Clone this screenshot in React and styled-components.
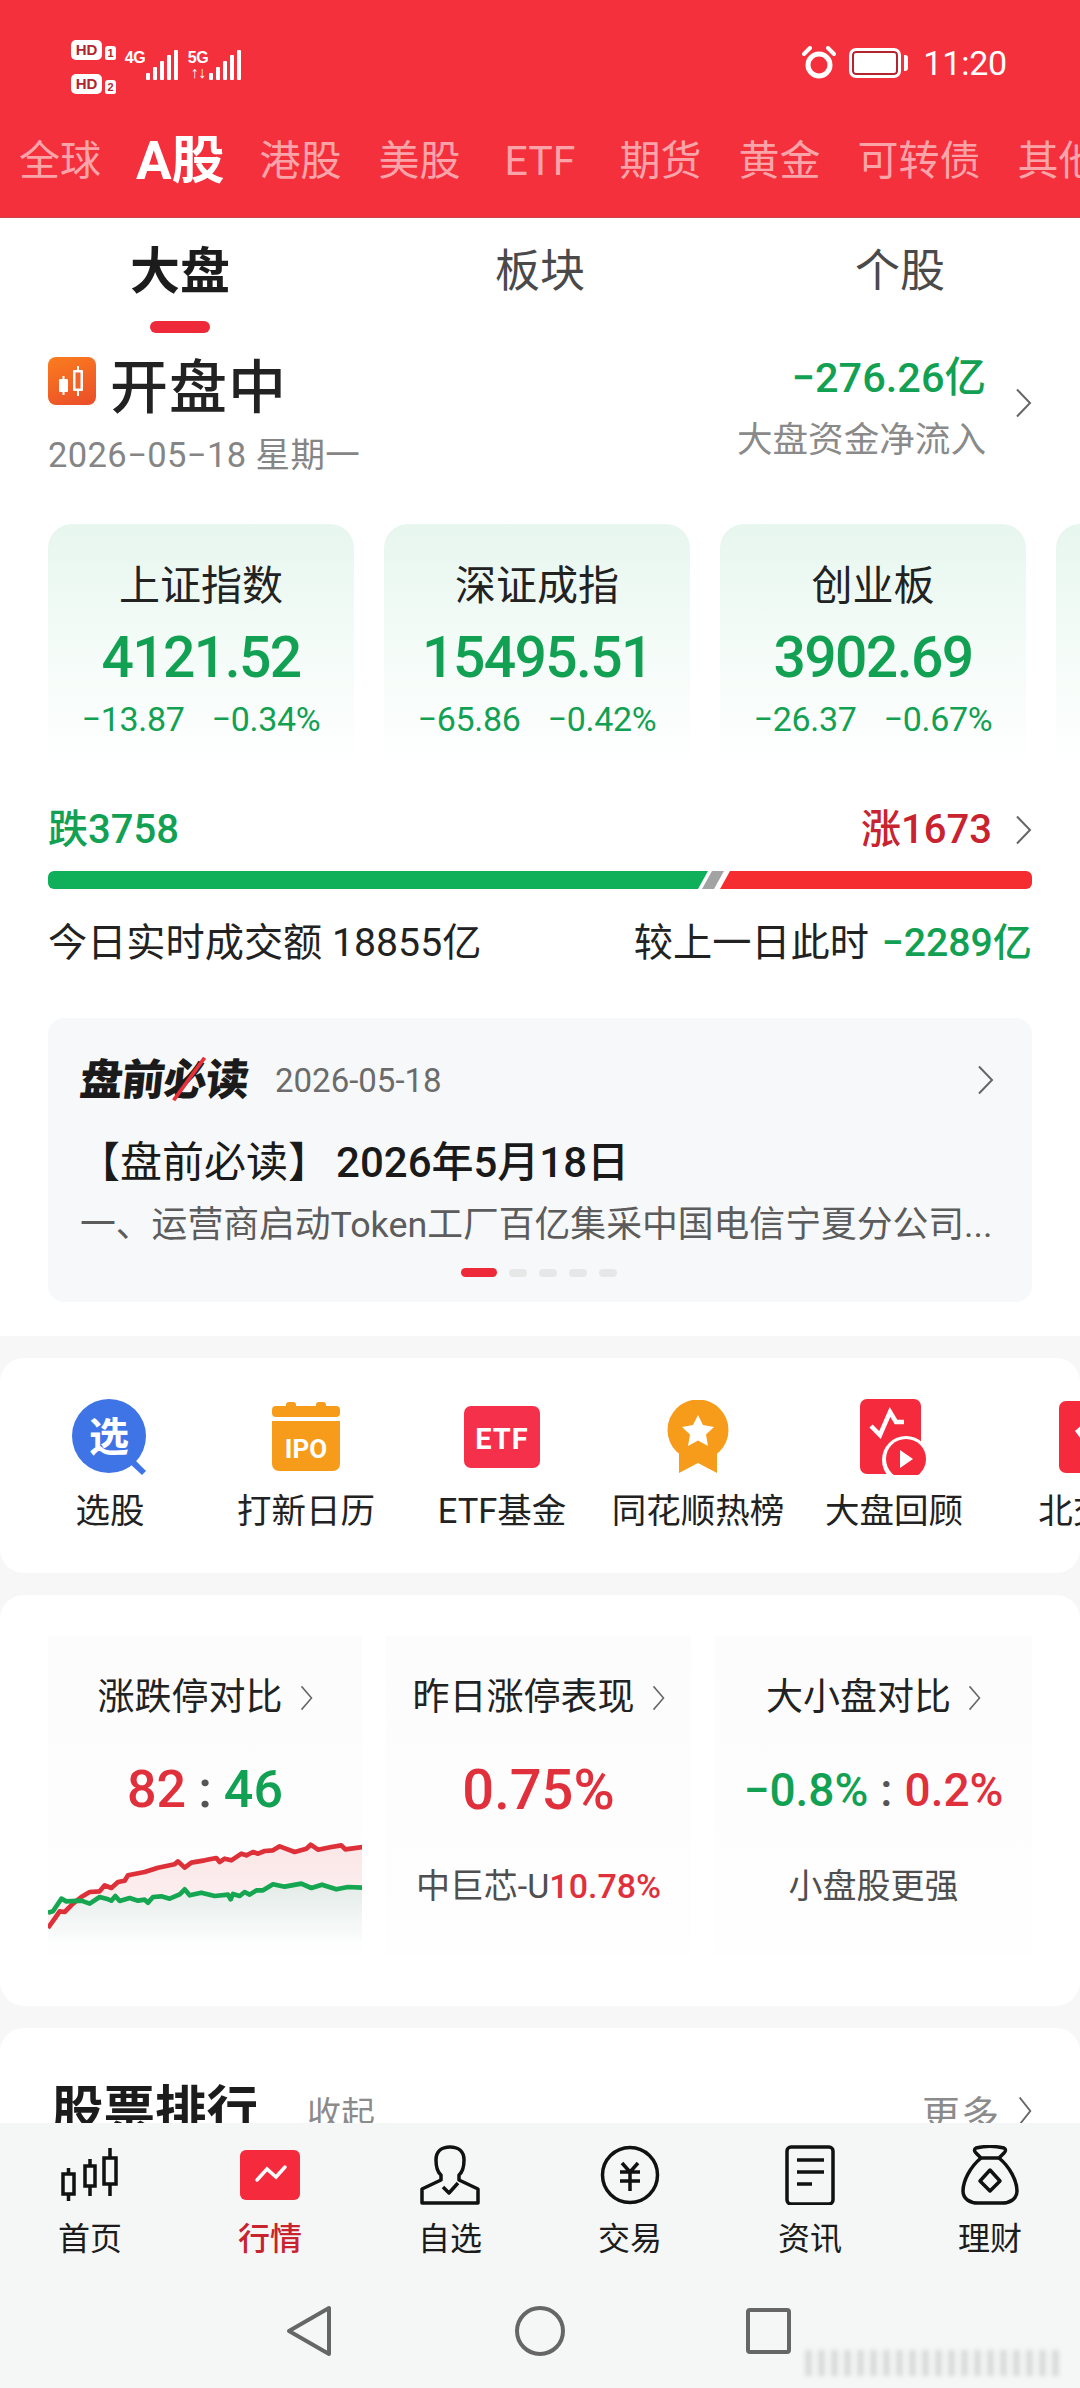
import React from 'react';
import styled, { createGlobalStyle } from 'styled-components';

const GlobalStyle = createGlobalStyle`
html, body { margin: 0; padding: 0; background: #fff; }
* { box-sizing: border-box; }
body { font-family: Roboto, "Noto Sans CJK SC", sans-serif; }
`;

const GREEN = '#12a153';
const RED = '#e0303c';

const Screen = styled.div`
width: 1080px;
height: 2388px;
display: flex;
flex-direction: column;
overflow: hidden;
background: #f7f7f7;
`;

/* header */
const Header = styled.header`
flex: 0 0 218px;
background: #f4303d;
border-bottom: 1px solid #c9404a;
display: flex;
flex-direction: column;
`;
const StatusBar = styled.div`
height: 136px;
padding: 40px 73px 0 71px;
display: flex;
justify-content: space-between;
align-items: flex-start;
color: #fff;
`;
const StatusLeft = styled.div`
display: flex;
gap: 9px;
`;
const SimColumn = styled.div`
display: flex;
flex-direction: column;
gap: 14px;
`;
const SimRow = styled.div`
display: flex;
align-items: flex-end;
gap: 3px;
`;
const HdBadge = styled.span`
width: 31px;
height: 20px;
border-radius: 5px;
background: #fff;
color: #b3242e;
font: 700 15px/20px "Liberation Sans", sans-serif;
text-align: center;
`;
const SimTag = styled.span`
width: 11px;
height: 14px;
border-radius: 3px 3px 2px 2px;
background: #fff;
color: #b3242e;
font: 700 11px/14px "Liberation Sans", sans-serif;
text-align: center;
`;
const Signal = styled.div`
display: flex;
align-items: flex-end;
gap: 1px;
height: 40px;
padding-top: 10px;
`;
const NetColumn = styled.div`
display: flex;
flex-direction: column;
justify-content: space-between;
align-items: center;
height: 30px;
width: 20px;
`;
const NetLabel = styled.span`
font: 700 16px/15px "Liberation Sans", sans-serif;
letter-spacing: -0.5px;
`;
const StatusRight = styled.div`
display: flex;
align-items: center;
height: 46px;
gap: 13px;
`;
const Clock = styled.span`
font: 400 34px/46px Roboto, sans-serif;
margin-left: 2px;
letter-spacing: -0.2px;
`;
const Battery = styled.div`
display: flex;
align-items: center;
gap: 3px;
`;
const BatteryBody = styled.div`
width: 52px;
height: 30px;
border-radius: 7px;
background: #fff;
border: 3px solid #fff;
box-shadow: inset 0 0 0 2px #b3242e;
`;
const BatteryCap = styled.div`
width: 4px;
height: 16px;
border-radius: 0 3px 3px 0;
background: #fff;
`;
const MarketTabs = styled.nav`
display: flex;
align-items: center;
gap: 37px;
padding-left: 19px;
height: 50px;
white-space: nowrap;
overflow: hidden;
`;
const MarketTab = styled.span`
font-size: ${p => (p.$active ? 53 : 41)}px;
font-weight: ${p => (p.$active ? 700 : 400)};
line-height: 50px;
color: ${p => (p.$active ? '#fff' : 'rgba(255,255,255,.58)')};
flex: none;
margin: ${p => (p.$active ? '0 -2px 0 -2px' : p.$latin ? '0 7px' : '0')};
`;

/* scrolling content */
const Scroll = styled.main`
flex: 1;
min-height: 0;
overflow: hidden;
`;
const Section = styled.section`
background: #fff;
border-radius: ${p => (p.$flat ? '0' : '24px')};
margin-bottom: 22px;
padding-bottom: ${p => p.$pad || 0}px;
`;
const SubTabs = styled.div`
display: grid;
grid-template-columns: repeat(3, 360px);
height: 115px;
`;
const SubTab = styled.div`
display: flex;
flex-direction: column;
align-items: center;
padding-top: 26px;
font-size: ${p => (p.$active ? 50 : 45)}px;
font-weight: ${p => (p.$active ? 700 : 400)};
line-height: 56px;
color: ${p => (p.$active ? '#1c1c1c' : '#4a4a4a')};
`;
const Indicator = styled.i`
width: 60px;
height: 12px;
border-radius: 6px;
background: #ee2a3a;
margin-top: 21px;
`;
const Summary = styled.div`
display: flex;
justify-content: space-between;
padding: 20px 48px 0;
height: 191px;
`;
const SummaryLeft = styled.div`
display: flex;
flex-direction: column;
`;
const StateRow = styled.div`
display: flex;
align-items: center;
gap: 14px;
height: 70px;
margin-top: -5px;
`;
const StateIcon = styled.div`
width: 48px;
height: 48px;
border-radius: 8px;
background: linear-gradient(160deg, #fb7d1e, #ea4d2a);
display: flex;
align-items: center;
justify-content: center;
margin-top: -4px;
`;
const StateText = styled.h1`
margin: 0;
font-size: 58px;
font-weight: 500;
color: #222;
letter-spacing: 1px;
`;
const DateLine = styled.div`
font-size: 34.5px;
line-height: 40px;
color: #858585;
margin-top: 17px;
letter-spacing: 0.4px;
`;
const SummaryRight = styled.div`
display: flex;
align-items: flex-start;
gap: 29px;
`;
const FlowColumn = styled.div`
display: flex;
flex-direction: column;
align-items: flex-end;
`;
const FlowValue = styled.div`
font-size: 41.5px;
line-height: 50px;
font-weight: 500;
color: ${GREEN};
`;
const FlowLabel = styled.div`
font-size: 35.6px;
line-height: 44px;
color: #8a8a8a;
margin-top: 15px;
`;
const ChevronSlot = styled.div`
margin-top: 35px;
`;
const Cards = styled.div`
display: flex;
gap: 30px;
padding-left: 48px;
overflow: hidden;
`;
const IndexCard = styled.div`
flex: 0 0 306px;
height: 246px;
border-radius: 24px 24px 0 0;
background: linear-gradient(180deg, #e7f6ef 0%, #f3fbf7 45%, #fff 100%);
display: flex;
flex-direction: column;
align-items: center;
padding-top: 38px;
`;
const CardTitle = styled.div`
font-size: 41px;
line-height: 48px;
color: #222;
`;
const CardValue = styled.div`
font-size: 57px;
line-height: 62px;
font-weight: 500;
color: ${GREEN};
margin-top: 17px;
letter-spacing: -1.6px;
`;
const CardDelta = styled.div`
display: flex;
gap: 27px;
font-size: 34px;
line-height: 40px;
color: ${GREEN};
margin-top: 10px;
letter-spacing: -0.3px;
`;
const Breadth = styled.div`
display: flex;
justify-content: space-between;
align-items: center;
padding: 0 48px;
margin-top: 40px;
height: 40px;
`;
const BreadthValue = styled.span`
font-size: 40px;
line-height: 40px;
font-weight: 500;
color: ${p => p.$color};
`;
const BreadthRight = styled.div`
display: flex;
align-items: center;
gap: 23px;
`;
const Bar = styled.div`
display: flex;
height: 18px;
margin: 21px 48px 0;
border-radius: 6px;
overflow: hidden;
`;
const BarPart = styled.div`
flex: ${p => p.$flex};
margin-left: ${p => p.$offset || 0}px;
background: ${p => p.$color};
clip-path: polygon(${p => (p.$offset ? '10px' : '0')} 0, 100% 0, ${p => (p.$end ? '100%' : 'calc(100% - 10px)')} 100%, 0 100%);
`;
const Turnover = styled.div`
display: flex;
justify-content: space-between;
padding: 0 48px;
margin-top: 32px;
font-size: 39.2px;
line-height: 44px;
color: #222;
`;
const TurnoverChange = styled.span`
color: ${GREEN};
font-weight: 500;
margin-left: 3px;
`;
const News = styled.div`
margin: 53px 48px 0;
height: 284px;
border-radius: 16px;
background: #f7f8f9;
padding: 38px 38px 0 32px;
display: flex;
flex-direction: column;
`;
const NewsTop = styled.div`
display: flex;
align-items: center;
height: 48px;
`;
const NewsLogo = styled.span`
display: inline-block;
font-size: 43px;
line-height: 48px;
font-weight: 900;
color: #1b1b1b;
letter-spacing: -1px;
transform: skewX(-6deg);
`;
const NewsLogoMark = styled.span`
position: relative;
&::after {
  content: '';
  position: absolute;
  left: 0;
  top: 22px;
  width: 50px;
  height: 4px;
  background: #e8303a;
  transform: rotate(-58deg);
}
`;
const NewsDate = styled.span`
font-size: 33px;
color: #6b6b6b;
margin-left: 27px;
flex: 1;
`;
const NewsTitle = styled.div`
font-size: 42px;
line-height: 46px;
color: #1a1a1a;
margin-top: 36px;
margin-left: -2px;
`;
const NewsTitleDate = styled.span`
font-weight: 500;
margin-left: 6px;
`;
const NewsBody = styled.div`
font-size: 35.8px;
line-height: 44px;
color: #5c5c5c;
margin-top: 17px;
white-space: nowrap;
width: 922px;
overflow: hidden;
`;
const Dots = styled.div`
display: flex;
align-items: center;
justify-content: center;
gap: 12px;
margin-top: 21px;
margin-left: 3px;
`;
const Dot = styled.i`
width: ${p => (p.$active ? 36 : 18)}px;
height: ${p => (p.$active ? 9 : 8)}px;
border-radius: 5px;
background: ${p => (p.$active ? '#ee2a3a' : '#e6e8e8')};
`;

/* quick entries */
const Quick = styled.div`
display: grid;
grid-auto-flow: column;
grid-auto-columns: 196px;
padding: 41px 0 42px 12px;
overflow: hidden;
`;
const QuickItem = styled.div`
display: flex;
flex-direction: column;
align-items: center;
gap: 16px;
`;
const QuickIcon = styled.div`
height: 76px;
display: flex;
align-items: center;
justify-content: center;
`;
const QuickLabel = styled.span`
font-size: 34.5px;
line-height: 40px;
color: #222;
white-space: nowrap;
`;

/* stats */
const Stats = styled.div`
display: grid;
grid-template-columns: 314px 305px 1fr;
gap: 24px;
padding: 41px 48px 51px;
`;
const StatCard = styled.div`
height: 319px;
background: linear-gradient(180deg, #fcfcfd, #fefefe);
display: flex;
flex-direction: column;
align-items: center;
padding-top: 42px;
overflow: hidden;
`;
const StatTitle = styled.div`
display: flex;
align-items: center;
gap: 17px;
font-size: 37px;
line-height: 40px;
color: #222;
white-space: nowrap;
`;
const StatValue = styled.div`
font-size: ${p => p.$size || 52}px;
line-height: 52px;
font-weight: 500;
margin-top: 46px;
white-space: nowrap;
color: ${p => p.$color || '#333'};
`;
const Up = styled.span`
color: ${RED};
`;
const UpNote = styled.span`
color: ${RED};
font-weight: 500;
`;
const Down = styled.span`
color: ${GREEN};
`;
const Colon = styled.span`
color: #555;
margin: 0 12px;
`;
const StatChart = styled.svg`
flex: none;
margin-top: 26px;
align-self: flex-start;
`;
const StatNote = styled.div`
font-size: 34px;
line-height: 40px;
color: #4f4f4f;
margin-top: 50px;
white-space: nowrap;
`;

/* ranking */
const RankHead = styled.div`
display: flex;
align-items: center;
padding: 53px 48px 60px 52px;
`;
const RankTitle = styled.h2`
margin: 0;
font-size: 51.5px;
line-height: 60px;
font-weight: 700;
color: #1c1c1c;
`;
const RankFold = styled.span`
font-size: 34px;
color: #8b8b8b;
margin-left: 49px;
flex: 1;
`;
const RankMore = styled.span`
display: flex;
align-items: center;
gap: 18px;
font-size: 38px;
color: #8b8b8b;
letter-spacing: 1px;
`;

/* bottom */
const Bottom = styled.footer`
flex: 0 0 265px;
background: #f5f7f7;
position: relative;
`;
const TabBar = styled.div`
display: grid;
grid-template-columns: repeat(6, 180px);
padding-top: 22px;
`;
const TabItem = styled.div`
display: flex;
flex-direction: column;
align-items: center;
gap: 16px;
`;
const TabIcon = styled.div`
height: 60px;
display: flex;
align-items: center;
justify-content: center;
`;
const TabLabel = styled.span`
font-size: 32px;
line-height: 36px;
color: ${p => (p.$active ? '#c9232f' : '#1c1c1c')};
font-weight: ${p => (p.$active ? 500 : 400)};
`;
const SystemNav = styled.div`
display: flex;
justify-content: center;
align-items: center;
gap: 170px;
margin-top: 48px;
`;
const Watermark = styled.div`
position: absolute;
left: 805px;
top: 227px;
width: 260px;
height: 26px;
filter: blur(2px);
background: repeating-linear-gradient(90deg, #d9dbdb 0 7px, transparent 7px 13px);
`;

const Chevron = ({ w = 17, h = 30, color = '#666' }) => (
  <svg width={w} height={h} viewBox="0 0 17 30" fill="none" preserveAspectRatio="none">
    <path d="M2 1.5 15 15 2 28.5" stroke={color} strokeWidth="2" />
  </svg>
);

const SignalBars = () => (
  <svg width="33" height="30" viewBox="0 0 33 30" fill="#fff">
    <rect x="0" y="23" width="4" height="7" rx="1" />
    <rect x="7" y="17" width="4" height="13" rx="1" />
    <rect x="14" y="11" width="4" height="19" rx="1" />
    <rect x="21" y="5" width="4" height="25" rx="1" />
    <rect x="28" y="0" width="4" height="30" rx="1" />
  </svg>
);

const AlarmIcon = () => (
  <svg width="34" height="34" viewBox="0 0 34 34" fill="none" stroke="#fff">
    <circle cx="17" cy="19" r="11" strokeWidth="5" />
    <path d="M17 13v7l5 3" strokeWidth="3" stroke="#f4303d" />
    <path d="M2 8 8 2M32 8 26 2" strokeWidth="4" strokeLinecap="round" />
  </svg>
);

const CandleSmall = () => (
  <svg width="34" height="34" viewBox="0 0 34 34" fill="#fff">
    <rect x="4" y="15" width="9" height="13" rx="1" />
    <rect x="7.5" y="12" width="2" height="19" />
    <rect x="18" y="6" width="10" height="21" rx="1" />
    <rect x="22" y="2" width="2" height="30" />
    <rect x="20.5" y="8.5" width="5" height="16" fill="#f1632a" />
  </svg>
);

const SelectIcon = () => (
  <svg width="76" height="76" viewBox="0 0 76 76">
    <circle cx="37" cy="37" r="37" fill="#3f74e6" />
    <path d="M62 60 74 72 70 76 57 64Z" fill="#3f74e6" />
    <text x="37" y="52" textAnchor="middle" fontSize="40" fontWeight="700" fill="#fff" fontFamily="Noto Sans CJK SC">选</text>
  </svg>
);

const IpoIcon = () => (
  <svg width="68" height="70" viewBox="0 0 68 70">
    <rect x="14" y="0" width="10" height="8" rx="3" fill="#f79c1a" />
    <rect x="44" y="0" width="10" height="8" rx="3" fill="#f79c1a" />
    <rect x="0" y="4" width="68" height="11" rx="4" fill="#f79c1a" />
    <path d="M0 19H68V62a7 7 0 0 1-7 7H7a7 7 0 0 1-7-7Z" fill="#f79c1a" />
    <text x="34" y="56" textAnchor="middle" fontSize="26" fontWeight="700" fill="#fff" fontFamily="Roboto">IPO</text>
  </svg>
);

const EtfIcon = () => (
  <svg width="76" height="62" viewBox="0 0 76 62">
    <rect width="76" height="62" rx="7" fill="#f5304a" />
    <text x="38" y="43" textAnchor="middle" fontSize="29" fontWeight="700" fill="#fff" fontFamily="Roboto" letterSpacing="1">ETF</text>
  </svg>
);

const MedalIcon = () => (
  <svg width="62" height="74" viewBox="0 0 62 74">
    <path d="M12 50V73L31 63 50 73V50Z" fill="#f79c1a" />
    <circle cx="31" cy="30" r="30.5" fill="#f79c1a" />
    <path d="M31 15 36 25 47 27 39 34.5 41 46 31 40.5 21 46 23 34.5 15 27 26 25Z" fill="#fff" />
  </svg>
);

const ReviewIcon = () => (
  <svg width="68" height="76" viewBox="0 0 68 76">
    <rect x="0" y="0" width="61" height="75" rx="7" fill="#f52a3c" />
    <path d="M11 27 20 36 30 13 36 23 H44" fill="none" stroke="#fff" strokeWidth="4.5" />
    <circle cx="46" cy="61" r="24" fill="#fff" />
    <circle cx="46" cy="60" r="20" fill="#f52a3c" />
    <path d="M40 51 53 60 40 69Z" fill="#fff" />
  </svg>
);

const BeijingIcon = () => (
  <svg width="62" height="72" viewBox="0 0 62 72">
    <rect width="62" height="72" rx="7" fill="#f52a3c" />
    <path d="M16 30 26 21H38L46 30 31 50Z" fill="#fff" />
    <circle cx="31" cy="30" r="4" fill="#f52a3c" />
  </svg>
);

const redLine = '50,378 70,350 85,328 100,330 125,305 150,285 175,270 205,268 220,250 240,258 260,240 280,236 290,220 340,210 380,197 430,187 440,178 460,197 480,182 520,175 555,168 565,180 580,170 600,175 630,155 645,160 665,150 680,155 700,147 725,145 745,133 790,150 825,140 838,128 860,143 900,135 930,130 942,142 995,135';
const greenLine = '50,332 65,328 90,290 105,298 150,296 175,305 205,285 225,290 240,296 252,282 265,297 295,288 320,296 340,293 350,302 365,285 390,283 415,290 445,277 460,262 475,280 510,272 550,282 590,278 598,292 605,276 625,282 640,270 655,278 675,265 695,265 725,247 760,254 810,245 840,258 872,248 915,262 950,255 995,257';

const LimitChart = () => (
  <StatChart width="314" height="110" viewBox="50 120 942 330">
    <defs>
      <linearGradient id="limitRed" x1="0" y1="0" x2="0" y2="1">
        <stop offset="0" stopColor="#fbe6e7" />
        <stop offset="1" stopColor="#fdf3f3" />
      </linearGradient>
      <linearGradient id="limitGreen" x1="0" y1="0" x2="0" y2="1">
        <stop offset="0" stopColor="#e3ebe7" />
        <stop offset="1" stopColor="#fcfdfd" />
      </linearGradient>
    </defs>
    <polygon points={`${greenLine} 995,420 50,420`} fill="url(#limitGreen)" />
    <polygon points={`${redLine} ${greenLine.split(' ').reverse().join(' ')}`} fill="url(#limitRed)" />
    <polyline points={redLine} fill="none" stroke="#dd3038" strokeWidth="14" strokeLinejoin="round" />
    <polyline points={greenLine} fill="none" stroke="#14a650" strokeWidth="14" strokeLinejoin="round" />
  </StatChart>
);

const HomeGlyph = () => (
  <svg width="60" height="60" viewBox="0 0 60 60" fill="none" stroke="#111" strokeWidth="3.5">
    <rect x="3" y="29" width="11" height="20" />
    <path d="M8.5 23V29M8.5 49V56" />
    <rect x="25" y="21" width="10" height="20" />
    <path d="M30 14V21M30 41V51" />
    <rect x="44" y="13" width="12" height="26" />
    <path d="M50 3V13M50 39V51" />
  </svg>
);
const MarketGlyph = () => (
  <svg width="60" height="50" viewBox="0 0 60 50">
    <rect width="60" height="50" rx="6" fill="#f52a3c" />
    <path d="M17 30 27 19 36 27 45 17" fill="none" stroke="#fff" strokeWidth="3.5" strokeLinecap="round" />
  </svg>
);
const WatchGlyph = () => (
  <svg width="60" height="60" viewBox="0 0 60 60" fill="none" stroke="#111" strokeWidth="3.5" strokeLinejoin="round">
    <path d="M2 58V44L21 35V30C16 26 16 18 16 15C16 6 22 2 30 2S44 6 44 15C44 18 44 26 39 30V35L58 44V58Z" />
    <path d="M23 42 29 48 38 38" />
  </svg>
);
const TradeGlyph = () => (
  <svg width="60" height="60" viewBox="0 0 60 60" fill="none" stroke="#111" strokeWidth="3.5">
    <circle cx="30" cy="30" r="27.5" />
    <path d="M22 18 30 27 38 18M20 27H40M20 36H40M30 27V46" />
  </svg>
);
const NewsGlyph = () => (
  <svg width="50" height="60" viewBox="0 0 50 60" fill="none" stroke="#111" strokeWidth="3.5">
    <rect x="2" y="2" width="46" height="57" rx="4" />
    <path d="M12 15H39M12 27H39M12 39H27" />
  </svg>
);
const WealthGlyph = () => (
  <svg width="58" height="60" viewBox="0 0 58 60" fill="none" stroke="#111" strokeWidth="3.5" strokeLinejoin="round">
    <path d="M15 3C23 1 35 1 43 3C45 4 45 6 43 8L38 13H20L15 8C13 6 13 4 15 3Z" />
    <path d="M20 13C9 22 2 36 2 46C2 54 9 58 17 58H41C49 58 56 54 56 46C56 36 49 22 38 13" />
    <path d="M29 25 39 36 29 46 19 36Z" />
  </svg>
);

const markets = ['全球', 'A股', '港股', '美股', 'ETF', '期货', '黄金', '可转债', '其他'];
const indexes = [
  { name: '上证指数', value: '4121.52', diff: '−13.87', pct: '−0.34%' },
  { name: '深证成指', value: '15495.51', diff: '−65.86', pct: '−0.42%' },
  { name: '创业板', value: '3902.69', diff: '−26.37', pct: '−0.67%' },
];
const quick = [
  { label: '选股', icon: <SelectIcon /> },
  { label: '打新日历', icon: <IpoIcon /> },
  { label: 'ETF基金', icon: <EtfIcon /> },
  { label: '同花顺热榜', icon: <MedalIcon /> },
  { label: '大盘回顾', icon: <ReviewIcon /> },
  { label: '北交所', icon: <BeijingIcon /> },
];
const tabs = [
  { label: '首页', icon: <HomeGlyph /> },
  { label: '行情', icon: <MarketGlyph />, active: true },
  { label: '自选', icon: <WatchGlyph /> },
  { label: '交易', icon: <TradeGlyph /> },
  { label: '资讯', icon: <NewsGlyph /> },
  { label: '理财', icon: <WealthGlyph /> },
];

export default function App() {
  return (
    <Screen>
      <GlobalStyle />
      <Header>
        <StatusBar>
          <StatusLeft>
            <SimColumn>
              <SimRow><HdBadge>HD</HdBadge><SimTag>1</SimTag></SimRow>
              <SimRow><HdBadge>HD</HdBadge><SimTag>2</SimTag></SimRow>
            </SimColumn>
            <Signal>
              <NetColumn><NetLabel>4G</NetLabel></NetColumn>
              <SignalBars />
            </Signal>
            <Signal>
              <NetColumn>
                <NetLabel>5G</NetLabel>
                <NetLabel>↑↓</NetLabel>
              </NetColumn>
              <SignalBars />
            </Signal>
          </StatusLeft>
          <StatusRight>
            <AlarmIcon />
            <Battery>
              <BatteryBody />
              <BatteryCap />
            </Battery>
            <Clock>11:20</Clock>
          </StatusRight>
        </StatusBar>
        <MarketTabs>
          {markets.map(m => (
            <MarketTab key={m} $active={m === 'A股'} $latin={m === 'ETF'}>{m}</MarketTab>
          ))}
        </MarketTabs>
      </Header>

      <Scroll>
        <Section $flat $pad={34}>
          <SubTabs>
            <SubTab $active>大盘<Indicator /></SubTab>
            <SubTab>板块</SubTab>
            <SubTab>个股</SubTab>
          </SubTabs>
          <Summary>
            <SummaryLeft>
              <StateRow>
                <StateIcon><CandleSmall /></StateIcon>
                <StateText>开盘中</StateText>
              </StateRow>
              <DateLine>2026−05−18 星期一</DateLine>
            </SummaryLeft>
            <SummaryRight>
              <FlowColumn>
                <FlowValue>−276.26亿</FlowValue>
                <FlowLabel>大盘资金净流入</FlowLabel>
              </FlowColumn>
              <ChevronSlot><Chevron /></ChevronSlot>
            </SummaryRight>
          </Summary>
          <Cards>
            {indexes.map(item => (
              <IndexCard key={item.name}>
                <CardTitle>{item.name}</CardTitle>
                <CardValue>{item.value}</CardValue>
                <CardDelta><span>{item.diff}</span><span>{item.pct}</span></CardDelta>
              </IndexCard>
            ))}
            <IndexCard />
          </Cards>
          <Breadth>
            <BreadthValue $color={GREEN}>跌3758</BreadthValue>
            <BreadthRight>
              <BreadthValue $color="#c8232f">涨1673</BreadthValue>
              <Chevron />
            </BreadthRight>
          </Breadth>
          <Bar>
            <BarPart $flex="0 0 660px" $color="#10b05a" />
            <BarPart $flex="0 0 22px" $offset={-6} $color="#a3a3a3" />
            <BarPart $flex="1" $offset={-4} $color="#f52c30" $end />
          </Bar>
          <Turnover>
            <span>今日实时成交额 18855亿</span>
            <span>较上一日此时 <TurnoverChange>−2289亿</TurnoverChange></span>
          </Turnover>
          <News>
            <NewsTop>
              <NewsLogo>盘前<NewsLogoMark>必</NewsLogoMark>读</NewsLogo>
              <NewsDate>2026-05-18</NewsDate>
              <Chevron />
            </NewsTop>
            <NewsTitle>【盘前必读】<NewsTitleDate>2026年5月18日</NewsTitleDate></NewsTitle>
            <NewsBody>一、运营商启动Token工厂百亿集采中国电信宁夏分公司...</NewsBody>
            <Dots>
              <Dot $active /><Dot /><Dot /><Dot /><Dot />
            </Dots>
          </News>
        </Section>

        <Section>
          <Quick>
            {quick.map(q => (
              <QuickItem key={q.label}>
                <QuickIcon>{q.icon}</QuickIcon>
                <QuickLabel>{q.label}</QuickLabel>
              </QuickItem>
            ))}
          </Quick>
        </Section>

        <Section>
          <Stats>
            <StatCard>
              <StatTitle>涨跌停对比<Chevron w={13} h={26} /></StatTitle>
              <StatValue><Up>82</Up><Colon>:</Colon><Down>46</Down></StatValue>
              <LimitChart />
            </StatCard>
            <StatCard>
              <StatTitle>昨日涨停表现<Chevron w={13} h={26} /></StatTitle>
              <StatValue $size={56} $color={RED}>0.75%</StatValue>
              <StatNote>中巨芯-U<UpNote>10.78%</UpNote></StatNote>
            </StatCard>
            <StatCard>
              <StatTitle>大小盘对比<Chevron w={13} h={26} /></StatTitle>
              <StatValue $size={46}><Down>−0.8%</Down><Colon>:</Colon><Up>0.2%</Up></StatValue>
              <StatNote>小盘股更强</StatNote>
            </StatCard>
          </Stats>
        </Section>

        <Section>
          <RankHead>
            <RankTitle>股票排行</RankTitle>
            <RankFold>收起</RankFold>
            <RankMore>更多<Chevron w={14} h={30} /></RankMore>
          </RankHead>
        </Section>
      </Scroll>

      <Bottom>
        <TabBar>
          {tabs.map(t => (
            <TabItem key={t.label}>
              <TabIcon>{t.icon}</TabIcon>
              <TabLabel $active={t.active}>{t.label}</TabLabel>
            </TabItem>
          ))}
        </TabBar>
        <SystemNav>
          <svg width="60" height="52" viewBox="0 0 60 52" fill="none" stroke="#666" strokeWidth="4" strokeLinejoin="round">
            <path d="M49 3V49L9 26Z" />
          </svg>
          <svg width="60" height="52" viewBox="0 0 60 52" fill="none" stroke="#666" strokeWidth="4">
            <circle cx="30" cy="26" r="23" />
          </svg>
          <svg width="60" height="52" viewBox="0 0 60 52" fill="none" stroke="#666" strokeWidth="4" strokeLinejoin="round">
            <rect x="8" y="5" width="41" height="42" rx="2" />
          </svg>
        </SystemNav>
        <Watermark />
      </Bottom>
    </Screen>
  );
}
